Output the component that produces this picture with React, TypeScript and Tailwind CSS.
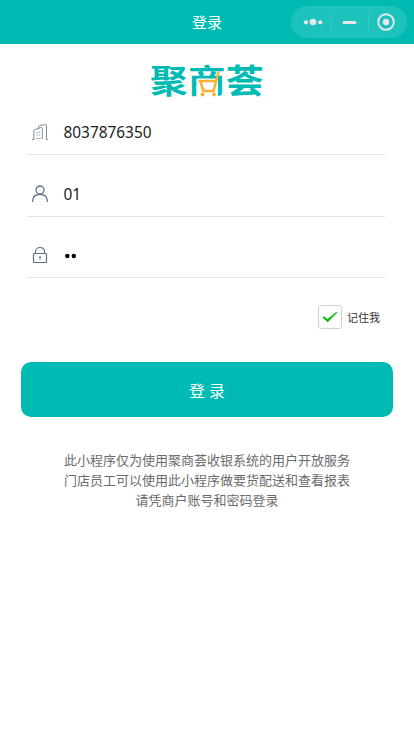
import type { ReactNode } from "react";

const fontStack = "font-['Noto_Sans','Noto_Sans_CJK_SC',sans-serif]";

function Capsule() {
  return (
    <div className="absolute top-1.5 right-[7px] flex h-8 w-[116px] items-center rounded-full bg-[#1dc2bc]">
      <svg viewBox="0 0 116 32" className="h-8 w-[116px]" fill="#e8e8e8" aria-hidden="true">
        <circle cx="15" cy="16.3" r="2.1" />
        <circle cx="22" cy="16" r="3.3" />
        <circle cx="29.2" cy="16.3" r="2.1" />
        <path d="M40.5 7v18M77.5 7v18" stroke="#38c8c2" />
        <rect x="51.5" y="15" width="14" height="3" rx="1.5" />
        <circle cx="95" cy="16" r="7.8" fill="none" stroke="#e8e8e8" strokeWidth="1.9" />
        <circle cx="95" cy="16" r="3.2" />
      </svg>
    </div>
  );
}

function Logo() {
  return (
    <div className="relative mx-auto h-[34px] w-[112px]">
      <div className="flex h-full origin-center scale-y-[.88] justify-between text-[37.5px] leading-[33px] font-bold text-[#00bbb4]">
        <span className="w-9 -translate-x-px">聚</span>
        <span className="w-9 -translate-x-px">商</span>
        <span className="w-9 -translate-x-px">荟</span>
      </div>
      <svg viewBox="0 0 26 28" className="absolute top-1.5 left-[45px] h-7 w-[26px]" fill="none" aria-hidden="true">
        <path d="M1 8.5H22V28H1Z" fill="#fff" />
        <path
          d="M3.5 11H18.5M4.5 11.5L7.5 21H17.5L22.5 2.5"
          stroke="#fbb034"
          strokeWidth="2.6"
          strokeLinecap="round"
          strokeLinejoin="round"
        />
        <circle cx="6.5" cy="24.5" r="1.9" fill="#fbb034" />
        <circle cx="18" cy="24.5" r="1.9" fill="#fbb034" />
      </svg>
    </div>
  );
}

function BuildingIcon() {
  return (
    <svg viewBox="0 0 18 18" className="size-[18px]" fill="none" stroke="#7e8c9a" aria-hidden="true">
      <path d="M1 16.5H2.8V8C2.8 7.2 3.2 6.8 4 6.5L10 4.6C10.8 4.4 11.3 4.8 11.3 5.5V16" />
      <path d="M7.5 5V4C7.5 3.4 7.9 3 8.5 2.8L14 1.6C15 1.4 15.5 1.8 15.5 2.7V16.5H17" />
      <path d="M5.3 9.5H9M5.3 12H9M4.5 15.5H10" stroke="#b3bdc7" />
    </svg>
  );
}

function UserIcon() {
  return (
    <svg viewBox="0 0 18 18" className="size-[18px]" fill="none" stroke="#5f7183" strokeWidth="1.3" aria-hidden="true">
      <circle cx="9" cy="5" r="4" />
      <path d="M1.5 17C1.5 12 4.5 9.3 9 9.3S16.5 12 16.5 17" />
    </svg>
  );
}

function LockIcon() {
  return (
    <svg viewBox="0 0 18 18" className="size-[18px]" fill="none" stroke="#5f7183" strokeWidth="1.2" aria-hidden="true">
      <rect x="2.5" y="7.5" width="13" height="9" rx=".5" />
      <path d="M4.5 7.5V6C4.5 0 13.5 0 13.5 6V7.5M9 10V13.5" />
    </svg>
  );
}

function Field({ icon, className, children }: { icon: ReactNode; className: string; children: ReactNode }) {
  return (
    <div className={`flex items-center border-b border-[#e4e4e4] pl-1 ${className}`}>
      {icon}
      <div className="ml-[14.5px] flex items-center pt-0.5 text-[15.4px] leading-5 text-[#1c1c1c]">{children}</div>
    </div>
  );
}

export default function App() {
  return (
    <main className={`min-h-screen bg-white ${fontStack}`}>
      <header className="relative flex h-11 items-center justify-center bg-[#00bbb4]">
        <h1 className="text-[15px] leading-5 text-white">登录</h1>
        <Capsule />
      </header>

      <div className="pt-5">
        <Logo />
      </div>

      <form className="mr-[29px] ml-[27px] pt-3">
        <Field icon={<BuildingIcon />} className="h-[45px]">8037876350</Field>
        <Field icon={<UserIcon />} className="mt-[17px] h-[45px]">01</Field>
        <Field icon={<LockIcon />} className="mt-4 h-[45px]">
          <svg viewBox="0 0 14 6" className="h-1.5 w-3.5" aria-hidden="true">
            <circle cx="3.3" cy="3" r="2.2" />
            <circle cx="9.8" cy="3" r="2.2" />
          </svg>
        </Field>
      </form>

      <label className="mt-[27px] mr-[34px] flex items-center justify-end text-[11px] leading-4 text-[#333]">
        <span className="mr-[5px] flex size-6 items-center justify-center rounded-[3px] border border-[#d1d1d1]">
          <svg viewBox="0 0 16 12" className="h-3 w-4" aria-hidden="true">
            <path d="M.5 6.5L2 5.2L5.5 8L14.5 .8L15.3 1.6L5.7 11.3Z" fill="#09bb07" />
          </svg>
        </span>
        <span className="pt-0.5">记住我</span>
      </label>

      <button
        type="button"
        className="mx-[21px] mt-[33px] flex h-[55px] w-[372px] items-center justify-center rounded-[10px] bg-[#00bbb4] pt-0.5 text-base text-white"
      >
        登 录
      </button>

      <p className="mt-[33px] text-center text-[13px] leading-5 text-[#6b6b6b]">
        此小程序仅为使用聚商荟收银系统的用户开放服务
        <br />
        门店员工可以使用此小程序做要货配送和查看报表
        <br />
        请凭商户账号和密码登录
      </p>
    </main>
  );
}
